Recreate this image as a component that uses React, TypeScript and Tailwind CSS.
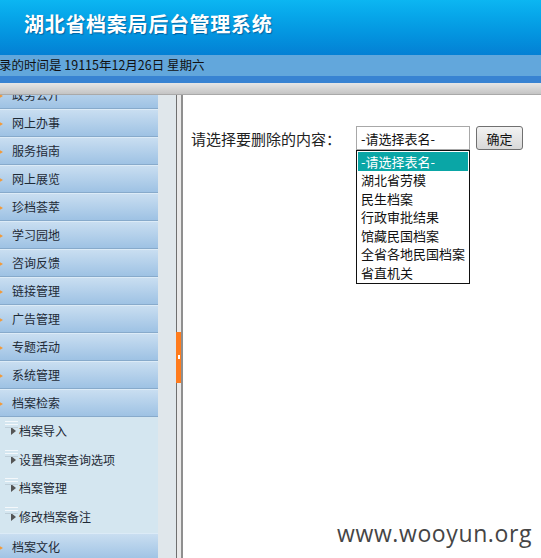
const menus = [
  "政务公开",
  "网上办事",
  "服务指南",
  "网上展览",
  "珍档荟萃",
  "学习园地",
  "咨询反馈",
  "链接管理",
  "广告管理",
  "专题活动",
  "系统管理",
  "档案检索",
];

const subMenus = ["档案导入", "设置档案查询选项", "档案管理", "修改档案备注"];

const options = [
  "-请选择表名-",
  "湖北省劳模",
  "民生档案",
  "行政审批结果",
  "馆藏民国档案",
  "全省各地民国档案",
  "省直机关",
];

const cjk = "font-['Noto_Sans_CJK_SC','Noto_Sans',sans-serif]";

const MenuItem = ({ label }: { label: string }) => (
  <div className="relative flex items-center h-[28px] w-[158px] border-t border-[#dcebf7] border-b border-b-[#87aacb] bg-gradient-to-b from-[#c9def1] to-[#9ec2e4]">
    <svg className="absolute left-[-2px] top-[11px]" width="6" height="6" viewBox="0 0 6 6">
      <path d="M0 0 L5 3 L0 6 Z" fill="#f29a3a" />
    </svg>
    <span className="pl-[12px] text-[12px] text-[#1e2a36] leading-none">{label}</span>
  </div>
);

const SubItem = ({ label }: { label: string }) => (
  <div className="relative h-[28.5px] flex items-center">
    <div className="absolute left-[5px] top-[4px] flex flex-col gap-[2px]">
      <div className="w-[13px] h-[1px] bg-[#f4f8fb]" />
      <div className="w-[13px] h-[1px] bg-[#f4f8fb]" />
      <div className="w-[13px] h-[1px] bg-[#bfcfd9]" />
    </div>
    <svg className="ml-[11px]" width="5" height="8" viewBox="0 0 5 8">
      <path d="M0 0 L5 4 L0 8 Z" fill="#555" />
    </svg>
    <span className="ml-[3px] text-[12px] text-[#1e2a36] leading-none">{label}</span>
  </div>
);

export default function App() {
  return (
    <div className={`w-[541px] h-[558px] overflow-hidden bg-white flex flex-col ${cjk}`}>
      {/* header */}
      <div className="h-[55px] shrink-0 bg-gradient-to-b from-[#0cb6f2] to-[#0480d4] flex items-center pl-[24px]">
        <h1 className="text-white text-[20px] font-bold tracking-[0.7px] [text-shadow:1px_1px_1px_rgba(0,40,90,0.45)] -mt-[7px]">
          湖北省档案局后台管理系统
        </h1>
      </div>
      <div className="h-[21px] shrink-0 bg-[#62a7dc] flex items-center overflow-hidden">
        <span className="text-[12.5px] text-[#111] whitespace-nowrap -ml-[1px]">
          录的时间是 19115年12月26日 星期六
        </span>
      </div>
      <div className="h-[7px] shrink-0 bg-[#3883d2]" />
      <div className="h-[12px] shrink-0 bg-gradient-to-b from-[#e6e6e6] to-[#c4c4c4] border-b border-[#a9a9a9]" />

      <div className="flex flex-1 min-h-0">
        {/* sidebar */}
        <div className="w-[176px] shrink-0 bg-[#e0e7eb] overflow-hidden">
          <div className="-mt-[14px]">
            {menus.map((m) => (
              <MenuItem key={m} label={m} />
            ))}
            <div className="w-[158px] bg-[#d4e6f0] pb-[2px]">
              {subMenus.map((s) => (
                <SubItem key={s} label={s} />
              ))}
            </div>
            <MenuItem label="档案文化" />
          </div>
        </div>

        {/* splitter */}
        <div className="w-[7px] shrink-0 flex">
          <div className="w-[1px] bg-[#6f6f6f]" />
          <div className="w-[4px] bg-[#e9e9e9] flex items-center">
            <div className="w-[5px] h-[51px] bg-[#ff7b1c] flex items-center justify-center -ml-[1px] mt-[61px]">
              <div className="w-[2px] h-[4px] bg-white" />
            </div>
          </div>
          <div className="w-[2px] bg-[#8f8f8f]" />
        </div>

        {/* content */}
        <div className="flex-1 relative bg-white">
          <div className="flex items-start pt-[31px] pl-[8px]">
            <span className="w-[165px] shrink-0 text-[15px] text-[#222] leading-[23px] mt-[1px] whitespace-nowrap">
              请选择要删除的内容：
            </span>
            <div className="flex flex-col">
              <div className="w-[114px] h-[24px] border border-[#a8a8a8] flex items-center pl-[4px] text-[13px] text-[#111] leading-none">
                -请选择表名-
              </div>
              <div className="w-[114px] border border-[#111] bg-white p-[1px]">
                {options.map((o, i) => (
                  <div
                    key={o}
                    className={`h-[18.5px] flex items-center pl-[3px] text-[13px] leading-none whitespace-nowrap ${
                      i === 0 ? "bg-[#0aa6a6] text-white" : "text-[#111]"
                    }`}
                  >
                    {o}
                  </div>
                ))}
              </div>
            </div>
            <button className="ml-[6px] w-[47px] h-[24px] border border-[#707070] rounded-[3px] bg-gradient-to-b from-[#f3f3f3] to-[#d8d8d8] text-[13px] text-[#111] leading-none">
              确定
            </button>
          </div>
          <div className="absolute right-[9px] bottom-[13px] text-[23px] leading-none text-[#454545] font-['Open_Sans',sans-serif] tracking-[0.6px]">
            www.wooyun.org
          </div>
        </div>
      </div>
    </div>
  );
}
